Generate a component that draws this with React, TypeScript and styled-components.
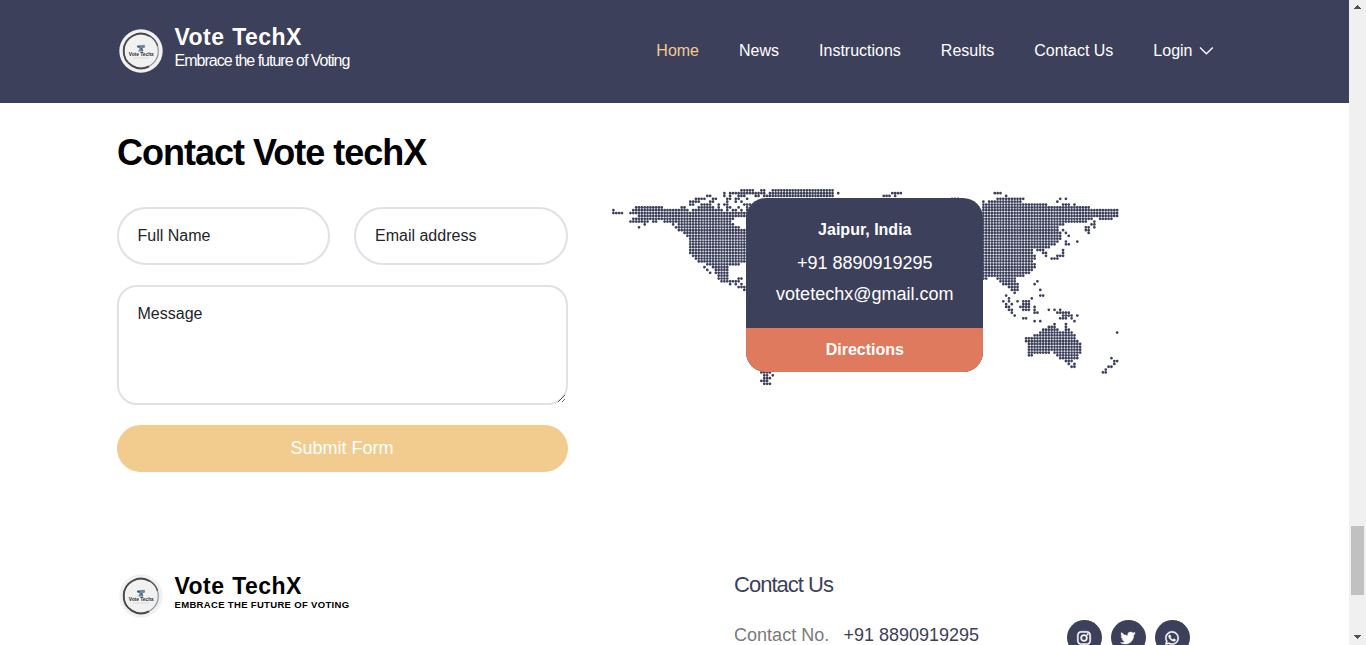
import React from "react";
import styled, { createGlobalStyle } from "styled-components";
import { BiLogoInstagram, BiLogoTwitter, BiLogoWhatsapp } from "react-icons/bi";

const NAVY = "#3d405b";
const SAND = "#f2cc8f";
const CORAL = "#e07a5f";

const GlobalStyle = createGlobalStyle`
  *, *::before, *::after { box-sizing: border-box; }
  body {
    margin: 0;
    overflow: hidden;
    background: #fff;
    font-family: "Liberation Sans", Arial, sans-serif;
    font-size: 16px;
    line-height: 1.5;
    color: #212529;
  }
  h1, h2, h3, p { margin: 0; }
  a { color: inherit; text-decoration: none; }
`;

const Window = styled.div`
  display: flex;
  width: 1366px;
  height: 645px;
  overflow: hidden;
`;

const Page = styled.div`
  flex: 1;
  min-width: 0;
  height: 645px;
  overflow: hidden;
`;

const Container = styled.div`
  width: 1140px;
  margin: 0 auto;
  padding: 0 12px;
`;

const Header = styled.header`
  height: 103px;
  background: ${NAVY};
`;

const HeaderBar = styled(Container)`
  display: flex;
  justify-content: space-between;
  align-items: flex-start;
`;

const Brand = styled.a<{ $top: number; $logoDrop?: number }>`
  display: flex;
  align-items: flex-start;
  gap: 10px;
  padding-top: ${(p) => p.$top}px;

  > svg {
    margin-top: ${(p) => p.$logoDrop ?? 0}px;
  }
`;

const BrandText = styled.div<{ $color: string }>`
  display: flex;
  flex-direction: column;
  color: ${(p) => p.$color};
`;

const BrandName = styled.span`
  font-size: 23px;
  font-weight: 700;
  line-height: 28px;
  letter-spacing: 0.45px;
  word-spacing: 1px;
  white-space: nowrap;
`;

const Tagline = styled.span`
  font-size: 16px;
  line-height: 18px;
  letter-spacing: -1px;
  margin-top: 1px;
  white-space: nowrap;
`;

const FooterTagline = styled.span`
  font-size: 9.5px;
  font-weight: 700;
  line-height: 10px;
  letter-spacing: 0.33px;
  text-transform: uppercase;
  white-space: nowrap;
`;

const Nav = styled.nav`
  display: flex;
  gap: 40px;
  padding: 39px 18px 0 0;
`;

const NavLink = styled.a<{ $active?: boolean }>`
  display: flex;
  align-items: center;
  gap: 6px;
  line-height: 24px;
  color: ${(p) => (p.$active ? SAND : "#fff")};

  > svg {
    margin-right: 1px;
  }
`;

const ContactSection = styled.section`
  height: 466px;
  padding-top: 28px;
`;

const Heading = styled.h1`
  padding-left: 0.5px;
  font-size: 36px;
  font-weight: 700;
  line-height: 44px;
  letter-spacing: -1px;
  color: #000;
`;

const Columns = styled.div`
  display: flex;
  align-items: flex-start;
  gap: 44px;
`;

const Form = styled.form`
  display: flex;
  flex-direction: column;
  gap: 20px;
  width: 451px;
  padding-top: 32px;
`;

const FieldRow = styled.div`
  display: grid;
  grid-template-columns: 1fr 1fr;
  gap: 24px;
`;

const fieldBase = `
  display: block;
  width: 100%;
  margin: 0;
  border: 2px solid #dee2e6;
  background: #fff;
  color: #212529;
  font-family: inherit;
  font-size: 16px;
  outline: none;
  &::placeholder { color: #212529; opacity: 1; }
`;

const Input = styled.input`
  ${fieldBase}
  height: 58px;
  padding: 0 19px;
  border-radius: 29px;
`;

const TextArea = styled.textarea`
  ${fieldBase}
  height: 120px;
  padding: 15px 19px;
  border-radius: 20px;
  line-height: 24px;
  resize: vertical;
`;

const Submit = styled.button`
  height: 47px;
  padding: 0;
  border: 0;
  border-radius: 24px;
  background: ${SAND};
  color: #fff;
  font-family: inherit;
  font-size: 18px;
`;

const MapArea = styled.div`
  position: relative;
  width: 520px;
  padding-top: 12px;
`;

const MapDrawing = styled.svg`
  display: block;
`;

const LocationCard = styled.div`
  position: absolute;
  left: 134.6px;
  top: 23px;
  width: 237.4px;
  height: 174px;
  display: flex;
  flex-direction: column;
  overflow: hidden;
  border-radius: 20px;
  background: ${NAVY};
  color: #fff;
  text-align: center;
`;

const CardBody = styled.div`
  flex: 1;
  padding-top: 20px;
`;

const City = styled.h3`
  font-size: 16px;
  font-weight: 700;
  line-height: 24px;
  margin-bottom: 6px;
`;

const CardLine = styled.p`
  font-size: 18px;
  line-height: 31px;
`;

const Directions = styled.a`
  height: 44px;
  background: ${CORAL};
  font-weight: 700;
  line-height: 43px;
`;

const FooterRow = styled(Container)`
  display: grid;
  grid-template-columns: 617.6px 332.9px auto;
  align-items: start;
`;

const FooterTitle = styled.h2`
  padding-top: 1px;
  font-size: 22px;
  font-weight: 400;
  line-height: 30px;
  letter-spacing: -1px;
  color: ${NAVY};
`;

const Phone = styled.p`
  display: flex;
  gap: 14.3px;
  margin-top: 22px;
  font-size: 18px;
  line-height: 27px;
  color: ${NAVY};
`;

const PhoneLabel = styled.span`
  color: #7a7a7a;
`;

const Socials = styled.div`
  display: flex;
  gap: 9px;
  padding-top: 51px;
`;

const Social = styled.a`
  display: flex;
  align-items: center;
  justify-content: center;
  width: 35px;
  height: 35px;
  border-radius: 50%;
  background: ${NAVY};
  color: #fff;
  font-size: 18px;

  > svg {
    stroke: currentColor;
    stroke-width: 0.6px;
  }
`;

const ScrollTrack = styled.div`
  display: flex;
  flex-direction: column;
  align-items: center;
  width: 17px;
  height: 645px;
  background: #f0f0f0;
`;

const ScrollThumb = styled.div`
  width: 13px;
  height: 69px;
  margin: 509px 0 32px;
  background: #c1c1c1;
`;

const ScrollArrow = styled.svg`
  display: block;
  width: 17px;
  height: 17px;
`;

/* Runs of dots, one string per map row: "first-last" or a single column. */
const MAP_ROWS: string[] = [
  "45-49 52-53 56-77",
  "39 41-53 55-77 79 98-101 134-136",
  "33-34 39 41 44-46 50-51 53-77 95-97 99 138",
  "29-32 35-36 40-41 43-44 47 119-121 135-144 157 159",
  "27-30 34-35 40 43 45 130 132-143 156",
  "27-28 31-34 37 39-40 46-48 130-152 158-160 162",
  "8-17 24-25 30-35 37 40-41 44 47 130-167",
  "0 7-26 28-38 40 42-43 45 47 130-177",
  "0-3 6-48 130-177",
  "9-48 130-177",
  "7-42 130-168 171-175",
  "6-12 14-15 18-41 130-166 169",
  "11 21 23-42 130-158 168-169",
  "9 22-44 130-156 166-167 169",
  "23-48 130-156 158 166-167",
  "25-48 130-157 159 167",
  "26-48 130-157 160",
  "27-48 130-157",
  "27-48 130-156 159 163",
  "27-48 130-155 159-160",
  "27-48 130-153",
  "27-48 130-147 149-151 158",
  "27-48 130-147 151-152 158",
  "28-48 130-148 152 156-158",
  "29-48 130-148 154-156",
  "30-48 130-147",
  "33-44 130-148",
  "32 35-40 130-148",
  "33 36-40 130-147",
  "34 36-40 130-146",
  "37-40 47 130-144",
  "37-40 44-45 130-131 135-141",
  "38-44 136-141 149",
  "41 43 45 137-142 148",
  "44-47 139-142",
  "46-48 140-142 150",
  "47 141",
  "138 150-151",
  "139 147",
  "137 139 142 144-146",
  "138 140 144-146",
  "138-139 143-146 148",
  "139-140 144-146 148 153 155 157",
  "140 148-149 156-160",
  "141 158-161 163",
  "144-145 157-159 161",
  "148 150 162",
  "155 159",
  "153-155 159",
  "151-156 159-160",
  "150-161 177",
  "148-162",
  "145-162",
  "145-163",
  "146-164",
  "146-164",
  "146-164",
  "146-153 155-164",
  "146-147 156-163",
  "157-163 175",
  "159-161 176-177",
  "160 162 176",
  "161-162 174-175",
  "52-55 173",
  "52-55 172-173",
  "53-54 56",
  "53-55",
  "52-54",
  "53-55",
];

const PITCH = 2.846;
const DOT = 1.38;

function dotPath(): string {
  const parts: string[] = [];
  MAP_ROWS.forEach((row, r) => {
    row.split(" ").forEach((run) => {
      const [from, to = from] = run.split("-").map(Number);
      for (let c = from; c <= to; c++) {
        const x = (1.4 + c * PITCH - DOT).toFixed(2);
        const y = (3.3 + r * PITCH).toFixed(2);
        parts.push(`M${x} ${y}a${DOT} ${DOT} 0 1 0 ${DOT * 2} 0a${DOT} ${DOT} 0 1 0 ${-DOT * 2} 0`);
      }
    });
  });
  return parts.join("");
}

const WORLD = dotPath();

const LogoText = styled.text`
  font: 700 5.6px "Liberation Sans", Arial, sans-serif;
  fill: #25292e;
`;

const Logo = () => (
  <svg width="48" height="48" viewBox="0 0 48 48">
    <circle cx="24" cy="24" r="21.7" fill="#f1f1f1" />
    <circle cx="24" cy="24" r="17.3" fill="none" stroke="#8c8c8c" strokeWidth="1.1" />
    <path d="M33 9.2A17.3 17.3 0 1 0 32 39.3" fill="none" stroke="#484848" strokeWidth="1.9" />
    <path d="M33 9.2A17.3 17.3 0 0 1 40.6 19" fill="none" stroke="#5c5c5c" strokeWidth="1.4" />
    <path d="M20 18.6l7.6-.9.6 2.6-2.7 1.2 1 3h-5.4l1.6-3.2-2.4-.5z" fill="#6d8aa0" />
    <path d="M20.2 19.3l3 .6M24 21l1.6 2.6" stroke="#34506a" strokeWidth="1" />
    <LogoText x="11.8" y="29.2" textLength="25" lengthAdjust="spacingAndGlyphs">
      Vote Techx
    </LogoText>
    <path d="M16 31h16" stroke="#cdd0d2" strokeWidth=".7" />
  </svg>
);

const Chevron = () => (
  <svg width="15" height="10" viewBox="0 0 15 10">
    <path d="M1 1.5l6.4 6.3 6.4-6.3" fill="none" stroke="#fff" strokeWidth="1.3" />
  </svg>
);

const links = ["Home", "News", "Instructions", "Results", "Contact Us"];

export default function App() {
  return (
    <>
      <GlobalStyle />
      <Window>
        <Page>
          <Header>
            <HeaderBar>
              <Brand href="#" $top={23} $logoDrop={4}>
                <Logo />
                <BrandText $color="#fff">
                  <BrandName>Vote TechX</BrandName>
                  <Tagline>Embrace the future of Voting</Tagline>
                </BrandText>
              </Brand>
              <Nav>
                {links.map((label, i) => (
                  <NavLink key={label} href="#" $active={i === 0}>
                    {label}
                  </NavLink>
                ))}
                <NavLink href="#">
                  Login
                  <Chevron />
                </NavLink>
              </Nav>
            </HeaderBar>
          </Header>

          <ContactSection>
            <Container>
              <Heading>Contact Vote techX</Heading>
              <Columns>
                <Form>
                  <FieldRow>
                    <Input placeholder="Full Name" />
                    <Input placeholder="Email address" />
                  </FieldRow>
                  <TextArea placeholder="Message" />
                  <Submit type="button">Submit Form</Submit>
                </Form>
                <MapArea>
                  <MapDrawing width="510" height="202" viewBox="0 0 510 202">
                    <path d={WORLD} fill={NAVY} />
                  </MapDrawing>
                  <LocationCard>
                    <CardBody>
                      <City>Jaipur, India</City>
                      <CardLine>+91 8890919295</CardLine>
                      <CardLine>votetechx@gmail.com</CardLine>
                    </CardBody>
                    <Directions href="#">Directions</Directions>
                  </LocationCard>
                </MapArea>
              </Columns>
            </Container>
          </ContactSection>

          <footer>
            <FooterRow>
              <Brand href="#" $top={3}>
                <Logo />
                <BrandText $color="#000">
                  <BrandName>Vote TechX</BrandName>
                  <FooterTagline>Embrace the future of Voting</FooterTagline>
                </BrandText>
              </Brand>
              <div>
                <FooterTitle>Contact Us</FooterTitle>
                <Phone>
                  <PhoneLabel>Contact No.</PhoneLabel>
                  <span>+91 8890919295</span>
                </Phone>
              </div>
              <Socials>
                <Social href="#"><BiLogoInstagram /></Social>
                <Social href="#"><BiLogoTwitter /></Social>
                <Social href="#"><BiLogoWhatsapp /></Social>
              </Socials>
            </FooterRow>
          </footer>
        </Page>
        <ScrollTrack>
          <ScrollArrow viewBox="0 0 17 17" shapeRendering="crispEdges">
            <path d="M5 9h7V8h-1V7h-1V6H9V5H8v1H7v1H6v1H5z" fill="#505050" />
          </ScrollArrow>
          <ScrollThumb />
          <ScrollArrow viewBox="0 0 17 17" shapeRendering="crispEdges">
            <path d="M5 8h7v1h-1v1h-1v1H9v1H8v-1H7v-1H6V9H5z" fill="#505050" />
          </ScrollArrow>
        </ScrollTrack>
      </Window>
    </>
  );
}
